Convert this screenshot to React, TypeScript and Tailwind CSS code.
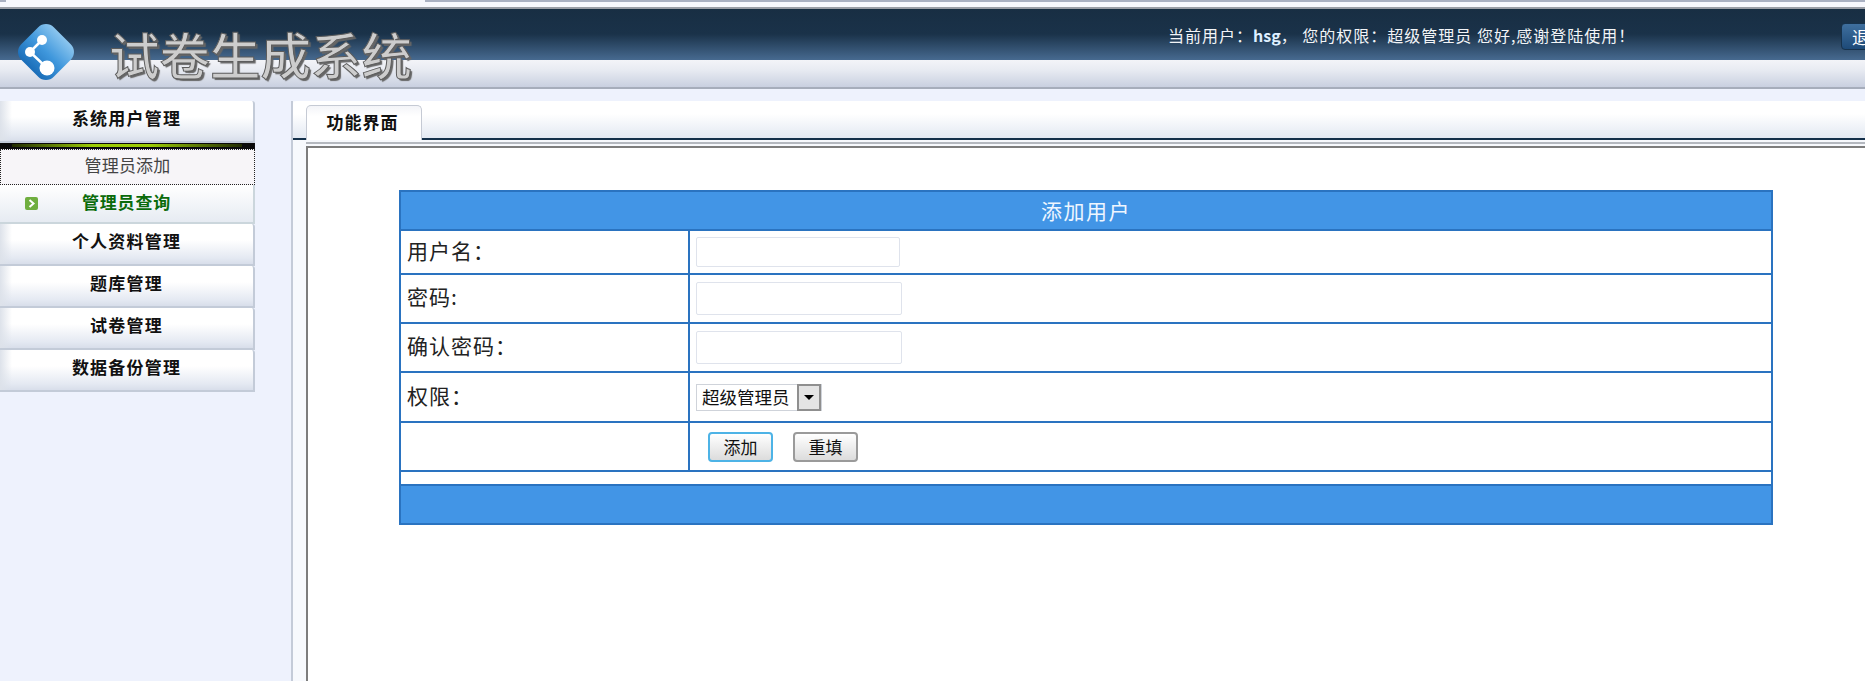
const font = "[font-family:'Noto_Sans_CJK_SC','Liberation_Sans',sans-serif]";

function NavHeader({ label, className }: { label: string; className: string }) {
  return (
    <div
      className={`flex items-center justify-center rounded-tr-[3px] border-r-2 border-b-2 border-[#c3cbd8] bg-[linear-gradient(90deg,#dde2ea,transparent_12px),linear-gradient(180deg,#ffffff_0%,#ffffff_40%,#e4e9f2_85%,#d8deea_100%)] pb-[8px] text-[17px] leading-none font-bold tracking-[1.2px] text-[#111] ${className}`}
    >
      {label}
    </div>
  );
}

function Logo() {
  return (
    <svg width="58" height="58" viewBox="0 0 58 58" className="shrink-0">
      <defs>
        <linearGradient id="logoBlue" x1="0" y1="0" x2="0" y2="1">
          <stop offset="0" stopColor="#8cc6ef" />
          <stop offset="0.5" stopColor="#3f97dc" />
          <stop offset="1" stopColor="#1a6db8" />
        </linearGradient>
      </defs>
      <rect x="6" y="6" width="46" height="46" rx="11" transform="rotate(45 29 29)" fill="url(#logoBlue)" />
      <path d="M25 17 L13 29 L30 45" fill="none" stroke="#ffffff" strokeWidth="2.5" />
      <circle cx="25" cy="17" r="5" fill="#ffffff" />
      <circle cx="13" cy="29" r="5" fill="#ffffff" />
      <circle cx="30" cy="45" r="7.5" fill="#ffffff" />
    </svg>
  );
}

function Row({ label, h, children }: { label: string; h: string; children: React.ReactNode }) {
  return (
    <tr className={h}>
      <td className="w-[289px] border-2 border-[#2a73c0] pb-[3px] pl-[6px] text-[21px] tracking-[1px] text-[#222]">{label}</td>
      <td className="border-2 border-[#2a73c0] pl-[6px] align-middle">{children}</td>
    </tr>
  );
}

export default function App() {
  return (
    <div className={`flex h-[681px] w-[1865px] flex-col overflow-hidden bg-[#eef2fd] ${font}`}>
      <div className="flex h-[9px] shrink-0 items-start justify-between border-b-2 border-[#9a9ea6] bg-[#f7f8fd]">
        <div className="h-[2px] w-[6px] bg-[#aab1c2]" />
        <div className="h-[2px] w-[1440px] bg-[#aab1c2]" />
      </div>

      <header className="flex h-[80px] shrink-0 border-b-2 border-[#a6adbb] bg-[linear-gradient(180deg,#182e43_0%,#1a3249_32%,#46698f_65%,#46698f_65.5%,#f3f4f8_65.5%,#e8ebf2_78%,#c9d0e0_100%)]">
        <div className="mt-[14px] ml-[17px] shrink-0">
          <Logo />
        </div>
        <div className="mt-[13px] ml-[34px] w-[303px] shrink-0 text-[50.5px] leading-[62px] font-medium whitespace-nowrap text-[#cdcdcd] [-webkit-text-stroke:1px_#5c5c5c] [text-shadow:2px_2px_1px_#666]">
          试卷生成系统
        </div>
        <div className="mt-[14px] ml-[756px] h-[24px] w-[673px] shrink-0 text-[16px] leading-[24px] tracking-[1px] whitespace-nowrap text-[#f2f4f7]">
          当前用户：<b className="tracking-normal text-[#dfefff]">hsg</b>， 您的权限：超级管理员 您好,感谢登陆使用！
        </div>
        <button className="mt-[14px] h-[27px] w-[60px] shrink-0 rounded-[4px] border border-[#16324c] bg-[linear-gradient(180deg,#3f6f9e,#1d4a78)] pl-[10px] text-left text-[17px] leading-none whitespace-nowrap text-white">
          退出
        </button>
      </header>

      <div className="flex min-h-0 flex-1 pt-[12px]">
        <aside className="w-[255px] shrink-0">
          <NavHeader label="系统用户管理" className="h-[42px]" />
          <div className="flex h-[6px] border-r border-[#111] bg-[#0a0a0a] px-[12px] py-[1px]">
            <div className="h-[3px] flex-1 bg-[linear-gradient(90deg,#202a00,#9ccc00_35%,#9ccc00_60%,#202a00)]" />
          </div>
          <div className="flex h-[36px] items-center justify-center border border-dotted border-[#222] bg-[#f7f5f8] pb-[5px] text-[17px] leading-none tracking-[0.2px] text-[#444]">
            管理员添加
          </div>
          <div className="flex h-[39px] items-center border-r-2 border-b-2 border-[#cbd6dc] bg-[linear-gradient(180deg,#ffffff,#e6ebf2)] pl-[25px]">
            <svg width="13" height="13" viewBox="0 0 13 13" className="shrink-0">
              <rect width="13" height="13" rx="2" fill="#6fae3f" />
              <path d="M4.5 3 L8.5 6.5 L4.5 10" fill="none" stroke="#ffffff" strokeWidth="2" />
            </svg>
            <span className="-mt-[4px] ml-[44px] text-[17px] leading-none font-bold tracking-[0.8px] text-[#0b6b0b]">管理员查询</span>
          </div>
          <NavHeader label="个人资料管理" className="h-[42px]" />
          <NavHeader label="题库管理" className="h-[42px]" />
          <NavHeader label="试卷管理" className="h-[42px]" />
          <NavHeader label="数据备份管理" className="h-[42px]" />
        </aside>

        <main className="ml-[36px] flex min-w-0 flex-1 flex-col border-l-2 border-[#c4cbd8] bg-[#f7f9fd]">
          <div className="flex h-[39px] shrink-0 items-end rounded-tl-[4px] border-b-2 border-[#14304a] bg-[linear-gradient(180deg,#ffffff_0%,#ffffff_35%,#e3e9f2_100%)] pl-[13px]">
            <div className="-mb-[2px] flex h-[35px] w-[116px] items-center justify-center rounded-t-[5px] border-x border-t border-[#c5cad4] bg-[linear-gradient(180deg,#f3f4f8,#ffffff_30%)] pr-[3px] pb-[3px] text-[17px] leading-none font-bold tracking-[1px] text-[#111]">
              功能界面
            </div>
          </div>
          <div className="ml-[13px] flex min-h-0 flex-1 flex-col pt-[2px]">
            <div className="h-[2px] shrink-0 bg-[#b4b8bf]" />
            <div className="mt-[2px] flex-1 border-t-2 border-l-2 border-[#7d7d7d] bg-white pt-[42px] pl-[91px]">
              <table className="w-[1374px] border-collapse border-2 border-[#2a73c0] bg-white">
                <tbody>
                  <tr className="h-[39px]">
                    <td colSpan={2} className="border-2 border-[#2a73c0] bg-[#4295e6] pb-[1px] text-center text-[21px] leading-none tracking-[1.5px] text-[#eef6ff]">
                      添加用户
                    </td>
                  </tr>
                  <Row label="用户名：" h="h-[44px]">
                    <input className="block h-[30px] w-[204px] rounded-[2px] border border-[#dfe3ec] bg-white" />
                  </Row>
                  <Row label="密码:" h="h-[49px]">
                    <input className="block h-[33px] w-[206px] rounded-[2px] border border-[#dfe3ec] bg-white" />
                  </Row>
                  <Row label="确认密码：" h="h-[49px]">
                    <input className="block h-[33px] w-[206px] rounded-[2px] border border-[#dfe3ec] bg-white" />
                  </Row>
                  <Row label="权限：" h="h-[50px]">
                    <div className="flex h-[27px] w-[126px] items-center border border-[#cfd3da] bg-white pl-[5px] text-[17.5px] leading-none whitespace-nowrap text-[#111]">
                      超级管理员
                      <span className="ml-auto flex h-[27px] w-[24px] shrink-0 items-center justify-center border-2 border-[#8f8f8f] bg-[#e4e4e4]">
                        <span className="h-0 w-0 border-x-[5px] border-t-[5px] border-x-transparent border-t-black" />
                      </span>
                    </div>
                  </Row>
                  <tr className="h-[49px]">
                    <td className="border-2 border-[#2a73c0]" />
                    <td className="border-2 border-[#2a73c0] pl-[18px]">
                      <div className="flex gap-[20px]">
                        <button className="h-[30px] w-[65px] rounded-[4px] border-2 border-[#4db3e6] bg-[linear-gradient(180deg,#ffffff,#dcdcdc)] text-[17px] leading-none text-[#111]">添加</button>
                        <button className="h-[30px] w-[65px] rounded-[4px] border-2 border-[#9a9a9a] bg-[linear-gradient(180deg,#ffffff,#dcdcdc)] text-[17px] leading-none text-[#111]">重填</button>
                      </div>
                    </td>
                  </tr>
                  <tr className="h-[14px]">
                    <td colSpan={2} className="border-2 border-[#2a73c0]" />
                  </tr>
                  <tr className="h-[39px]">
                    <td colSpan={2} className="border-2 border-[#2a73c0] bg-[#4295e6]" />
                  </tr>
                </tbody>
              </table>
            </div>
          </div>
        </main>
      </div>
    </div>
  );
}
